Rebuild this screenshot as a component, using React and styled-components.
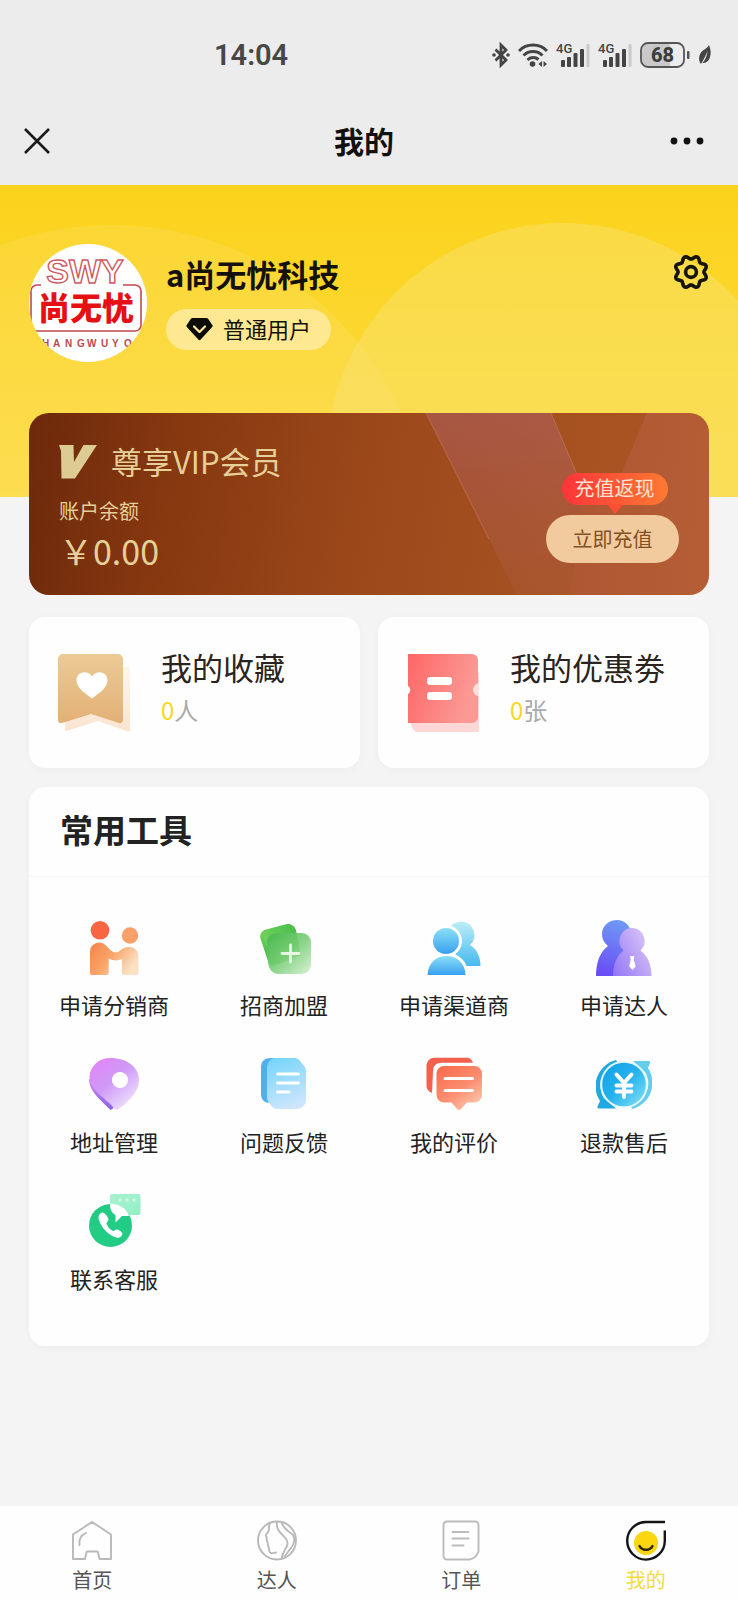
import React from "react";
import styled, { createGlobalStyle } from "styled-components";

const tools = [
  { name: "申请分销商", icon: <PartnerIcon /> },
  { name: "招商加盟", icon: <JoinIcon /> },
  { name: "申请渠道商", icon: <ChannelIcon /> },
  { name: "申请达人", icon: <TalentIcon /> },
  { name: "地址管理", icon: <AddressIcon /> },
  { name: "问题反馈", icon: <FeedbackIcon /> },
  { name: "我的评价", icon: <ReviewIcon /> },
  { name: "退款售后", icon: <RefundIcon /> },
  { name: "联系客服", icon: <ServiceIcon /> },
];

const tabs = [
  { name: "首页", icon: <HomeTabIcon /> },
  { name: "达人", icon: <TalentTabIcon /> },
  { name: "订单", icon: <OrderTabIcon /> },
  { name: "我的", icon: <MineTabIcon />, active: true },
];

const App = () => {
  return (
    <Page>
      <GlobalStyle />
      <Header>
        <StatusBar>
          <Time>14:04</Time>
          <StatusIcons />
        </StatusBar>
        <TitleBar>
          <IconButton aria-label="关闭">
            <svg width="26" height="26" viewBox="0 0 26 26">
              <path d="M1 1 25 25M25 1 1 25" stroke="#1b1b1b" strokeWidth="2.6" />
            </svg>
          </IconButton>
          <h1>我的</h1>
          <IconButton aria-label="更多">
            <svg width="34" height="10" viewBox="0 0 34 10" fill="#111">
              <circle cx="4" cy="5" r="3.4" />
              <circle cx="17" cy="5" r="3.4" />
              <circle cx="30" cy="5" r="3.4" />
            </svg>
          </IconButton>
        </TitleBar>
      </Header>

      <Main>
        <Hero>
          <HeroArt viewBox="0 0 738 312" preserveAspectRatio="xMidYMin slice">
            <circle cx="112" cy="356" r="316" fill="#fff" fillOpacity="0.09" />
            <circle cx="563" cy="274" r="236" fill="#f8e47a" fillOpacity="0.42" />
          </HeroArt>
          <Profile>
            <Avatar />
            <ProfileInfo>
              <h2>a尚无忧科技</h2>
              <Level>
                <svg width="27" height="24" viewBox="0 0 27 24">
                  <path
                    d="M6.5 1h14a2 2 0 0 1 1.6.8l4.200 6.200a1.5 1.5 0 0 1-.1 1.9L14.7 22.5a1.6 1.6 0 0 1-2.4 0L.8 9.900A1.5 1.5 0 0 1 .7 8l4.200-6.200A2 2 0 0 1 6.5 1z"
                    fill="#0d0b05"
                  />
                  <path
                    d="M8 9.500l5.500 5.500L19 9.500"
                    fill="none"
                    stroke="#fdeaa0"
                    strokeWidth="2.2"
                    strokeLinecap="round"
                    strokeLinejoin="round"
                  />
                </svg>
                <span>普通用户</span>
              </Level>
            </ProfileInfo>
            <SettingsButton aria-label="设置">
              <GearIcon />
            </SettingsButton>
          </Profile>
        </Hero>

        <Content>
          <VipCard>
            <VipArt viewBox="0 0 680 182" preserveAspectRatio="xMaxYMid slice">
              <defs>
                <linearGradient id="vip-band" x1="0" y1="0" x2="0" y2="1">
                  <stop offset="0" stopColor="#b0626a" stopOpacity="0.5" />
                  <stop offset="1" stopColor="#b0625a" stopOpacity="0.2" />
                </linearGradient>
                <linearGradient id="vip-edge" x1="0" y1="0" x2="1" y2="0">
                  <stop offset="0" stopColor="#b85f4c" stopOpacity="0.4" />
                  <stop offset="1" stopColor="#bd6442" stopOpacity="0.5" />
                </linearGradient>
              </defs>
              <path d="M397 0H522L556 80 540 182H488Z" fill="url(#vip-band)" />
              <path d="M618 0H680V182H540L556 80H584Z" fill="url(#vip-edge)" />
              <path
                d="M397 0 460 126M522 0 550 66"
                stroke="#d08070"
                strokeOpacity="0.5"
              />
            </VipArt>
            <VipInfo>
              <VipTitle>
                <svg width="38" height="34" viewBox="0 0 38 34">
                  <path
                    d="M0 0H14.5L15 17 24.5 0H38L16 33.5H2.5L2 6z"
                    fill="#dccb92"
                  />
                </svg>
                <span>尊享VIP会员</span>
              </VipTitle>
              <BalanceLabel>账户余额</BalanceLabel>
              <Balance>￥0.00</Balance>
            </VipInfo>
            <Recharge>
              <CashBack>充值返现</CashBack>
              <RechargeButton>立即充值</RechargeButton>
            </Recharge>
          </VipCard>

          <Features>
            <Feature href="#favorites">
              <FavoriteIcon />
              <div>
                <h3>我的收藏</h3>
                <p>
                  <b>0</b>人
                </p>
              </div>
            </Feature>
            <Feature href="#coupons">
              <CouponIcon />
              <div>
                <h3>我的优惠劵</h3>
                <p>
                  <b>0</b>张
                </p>
              </div>
            </Feature>
          </Features>

          <Panel>
            <PanelTitle>常用工具</PanelTitle>
            <ToolGrid>
              {tools.map((tool) => (
                <Tool href="#tool" key={tool.name}>
                  {tool.icon}
                  <span>{tool.name}</span>
                </Tool>
              ))}
            </ToolGrid>
          </Panel>
        </Content>
      </Main>

      <TabBar>
        {tabs.map((tab) => (
          <Tab href="#tab" key={tab.name} $active={tab.active}>
            {tab.icon}
            <span>{tab.name}</span>
          </Tab>
        ))}
      </TabBar>
    </Page>
  );
};

export default App;

function StatusIcons() {
  return (
    <StatusGroup>
      <svg width="18" height="26" viewBox="0 0 18 26">
        <path
          d="M3.500 7.500 14 18l-5 5V3l5 5L3.500 18.500"
          fill="none"
          stroke="#444"
          strokeWidth="2.8"
        />
        <circle cx="2" cy="13" r="1.8" fill="#444" />
        <circle cx="16" cy="13" r="1.8" fill="#444" />
      </svg>
      <svg width="30" height="26" viewBox="0 0 30 26">
        <g fill="none" stroke="#444" strokeWidth="3">
          <path d="M1 9a19.500 19.500 0 0 1 28 0" />
          <path d="M5.500 13.500a13.500 13.500 0 0 1 19 0" />
          <path d="M9.500 18a8 8 0 0 1 11-.5" />
        </g>
        <circle cx="14.5" cy="22" r="2.8" fill="#444" />
        <path d="M24 19v6L20.500 22zM25.500 19v6l3.500-3z" fill="#444" />
      </svg>
      <Signal />
      <Signal />
      <svg width="50" height="26" viewBox="0 0 50 26">
        <path d="M8 1.500H30V24.500H8a6 6 0 0 1-6-6V7.500a6 6 0 0 1 6-6z" fill="#c9c9c9" />
        <rect x="1" y="1" width="43" height="24" rx="7" fill="none" stroke="#555" strokeWidth="1.8" />
        <rect x="47" y="9" width="2.5" height="8" rx="1" fill="#555" />
        <text
          x="22.5"
          y="20"
          textAnchor="middle"
          fontFamily="Roboto, sans-serif"
          fontSize="20"
          fontWeight="800"
          fill="#3c3c3c"
        >
          68
        </text>
      </svg>
      <svg width="13" height="22" viewBox="0 0 13 22">
        <path
          d="M11 1c2 5 2 9 1 12-1 4-4 6-7.500 6C8 15 9 11 9.500 7 8 11 6 15 3 20 .5 17 .5 12 3 8.500 5 5.500 9 5 11 1z"
          fill="#444"
        />
      </svg>
    </StatusGroup>
  );
}

function Signal() {
  return (
    <svg width="34" height="26" viewBox="0 0 34 26">
      <text
        x="0"
        y="11"
        fontFamily="Roboto, sans-serif"
        fontSize="13"
        fontWeight="500"
        fill="#444"
      >
        4G
      </text>
      <g fill="#444">
        <rect x="5" y="18" width="4" height="7" rx="1" />
        <rect x="11" y="15" width="4" height="10" rx="1" />
        <rect x="17.5" y="11" width="4" height="14" rx="1" />
        <rect x="24" y="7" width="4" height="18" rx="1" />
      </g>
      <rect x="30.5" y="2" width="3" height="23" rx="1" fill="#c8c8c8" />
    </svg>
  );
}

function Avatar() {
  return (
    <AvatarImage viewBox="0 0 118 118" role="img" aria-label="尚无忧">
      <rect width="118" height="118" fill="#fff" />
      <path
        d="M12 41H8a6 6 0 0 0-6 6V81a6 6 0 0 0 6 6H106a6 6 0 0 0 6-6V47a6 6 0 0 0-6-6H94"
        fill="none"
        stroke="#c2474f"
        strokeWidth="1.6"
      />
      <text
        x="56"
        y="39"
        textAnchor="middle"
        fontFamily="Liberation Sans, sans-serif"
        fontSize="34"
        fontWeight="700"
        fill="#fff"
        stroke="#cf5a63"
        strokeWidth="1.4"
      >
        SWY
      </text>
      <text
        x="57"
        y="76"
        textAnchor="middle"
        fontFamily="Noto Sans CJK SC, sans-serif"
        fontSize="32"
        fontWeight="900"
        fill="#e60f14"
      >
        尚无忧
      </text>
      <text
        x="1 13 24 36 48 58 72 83 95 107"
        y="103"
        fontFamily="Liberation Sans, sans-serif"
        fontSize="10"
        fontWeight="700"
        fill="#b84a52"
      >
        SHANGWUYOU
      </text>
    </AvatarImage>
  );
}

// eight soft lobes around the hub
const gearOutline = Array.from({ length: 96 }, (_, i) => {
  const a = (i / 96) * Math.PI * 2;
  const r = 14.6 - 1.7 * Math.cos(8 * a);
  return `${(18 + r * Math.cos(a)).toFixed(2)} ${(18 + r * Math.sin(a)).toFixed(2)}`;
}).join("L");

function GearIcon() {
  return (
    <svg width="36" height="36" viewBox="0 0 36 36" fill="none" stroke="#17140a" strokeWidth="3.6">
      <path d={`M${gearOutline}Z`} strokeLinejoin="round" />
      <circle cx="18" cy="18" r="5.4" />
    </svg>
  );
}

function FavoriteIcon() {
  return (
    <svg width="74" height="80" viewBox="0 0 74 80">
      <defs>
        <linearGradient id="fav" x1="0" y1="0" x2="0" y2="1">
          <stop offset="0" stopColor="#ecca95" />
          <stop offset="1" stopColor="#e3b077" />
        </linearGradient>
        <linearGradient id="fav-shadow" x1="0" y1="0" x2="0" y2="1">
          <stop offset="0" stopColor="#fdf6ee" />
          <stop offset="1" stopColor="#fae4d0" />
        </linearGradient>
      </defs>
      <path
        d="M7 14H71a1 1 0 0 1 1 1V77a1.500 1.500 0 0 1-2 1.500L40 68 10 77.500a2 2 0 0 1-3-2z"
        fill="url(#fav-shadow)"
      />
      <path
        d="M5 1H60a5 5 0 0 1 5 5V67a3 3 0 0 1-4 3L33 61 4 70a3 3 0 0 1-4-3V6a5 5 0 0 1 5-5z"
        fill="url(#fav)"
      />
      <path
        d="M34 45.500C28 41 18.500 35 18.500 27.500c0-9 11-11 15.500-4 4.500-7 15.500-5 15.500 4C49.500 35 40 41 34 45.500z"
        fill="#fff"
      />
    </svg>
  );
}

function CouponIcon() {
  return (
    <svg width="74" height="80" viewBox="0 0 74 80">
      <defs>
        <linearGradient id="coupon" x1="0" y1="0" x2="1" y2="0.3">
          <stop offset="0" stopColor="#fd6766" />
          <stop offset="1" stopColor="#fb9a95" />
        </linearGradient>
      </defs>
      <path d="M4 20H72V79H10c-3 0-5-4-6-8z" fill="#fdd6d6" />
      <path
        d="M1 1H65a6 6 0 0 1 6 6V30a7 7 0 0 0 0 13V64a6 6 0 0 1-6 6H1V41c3-2 3-6 0-8z"
        fill="url(#coupon)"
      />
      <path d="M72 31a6 6 0 0 0 0 12z" fill="#fbe0dc" />
      <rect x="20" y="24" width="25" height="8" rx="3" fill="#fff" />
      <rect x="20" y="39" width="25" height="8" rx="3" fill="#fff" />
    </svg>
  );
}

function PartnerIcon() {
  return (
    <svg width="56" height="56" viewBox="0 0 56 56">
      <defs>
        <linearGradient id="partner" x1="0" y1="0" x2="1" y2="0.5">
          <stop offset="0" stopColor="#f7834a" />
          <stop offset="0.5" stopColor="#f9a468" />
          <stop offset="1" stopColor="#fbe0c4" />
        </linearGradient>
      </defs>
      <circle cx="14" cy="10.3" r="9.3" fill="#f76542" />
      <circle cx="44" cy="15.5" r="8.2" fill="#f8a069" />
      <path
        d="M4 32a9.300 9.300 0 0 1 16-6.500c4 4 6 7 10 7s5-5.500 13-5.500a9 9 0 0 1 9.500 9V53a2 2 0 0 1-2 2H38a2 2 0 0 1-2-2V39c-4 2-9 2-13.300-.5V53a2 2 0 0 1-2 2H6a2 2 0 0 1-2-2z"
        fill="url(#partner)"
      />
    </svg>
  );
}

function JoinIcon() {
  return (
    <svg width="56" height="56" viewBox="0 0 56 56">
      <defs>
        <linearGradient id="join" x1="0" y1="0" x2="1" y2="1">
          <stop offset="0" stopColor="#46b84c" />
          <stop offset="0.5" stopColor="#7acd78" />
          <stop offset="1" stopColor="#d3f0d0" />
        </linearGradient>
        <linearGradient id="join-back" x1="1" y1="0" x2="0" y2="1">
          <stop offset="0" stopColor="#43ba49" />
          <stop offset="0.6" stopColor="#6fd15b" />
          <stop offset="1" stopColor="#2ca63c" />
        </linearGradient>
      </defs>
      <path
        d="M10 9.500 30 4.300c5-1 8.500 1.700 10 5.700L45 36 16 46c-3-2-4-5-5-8L4.300 18C3.500 14 6 10.500 10 9.500z"
        fill="url(#join-back)"
      />
      <path
        d="M20 13H46a9 9 0 0 1 9 9V45a9 9 0 0 1-9 9H23c-7 0-10-5-11-11l-1-21a9 9 0 0 1 9-9z"
        fill="url(#join)"
        fillOpacity="0.9"
      />
      <path d="M34.500 25v17M26 33.500h17" stroke="#e5f8e2" strokeWidth="2.8" strokeLinecap="round" />
    </svg>
  );
}

function ChannelIcon() {
  return (
    <svg width="56" height="56" viewBox="0 0 56 56">
      <defs>
        <linearGradient id="channel" x1="0" y1="0" x2="0" y2="1">
          <stop offset="0" stopColor="#8be0f5" />
          <stop offset="1" stopColor="#38a0f0" />
        </linearGradient>
        <linearGradient id="channel-back" x1="0" y1="0" x2="0" y2="1">
          <stop offset="0" stopColor="#bdeef6" />
          <stop offset="1" stopColor="#45baf0" />
        </linearGradient>
      </defs>
      <path
        d="M35 1.500a13.500 13.500 0 0 1 9 23.500C51 29 54.500 37 54.500 46H36L24 24 22 11A13.500 13.500 0 0 1 35 1.500z"
        fill="url(#channel-back)"
      />
      <g stroke="#fff" strokeWidth="6" fill="#fff">
        <path d="M1.500 55C2 43 10 36 20.500 36S39 43 39.500 55z" />
        <circle cx="20" cy="21" r="13" />
      </g>
      <g fill="url(#channel)">
        <path d="M1.500 55C2 43 10 36 20.500 36S39 43 39.500 55z" />
        <circle cx="20" cy="21" r="13" />
      </g>
    </svg>
  );
}

function TalentIcon() {
  return (
    <svg width="56" height="56" viewBox="0 0 56 56">
      <defs>
        <linearGradient id="talent-back" x1="0.5" y1="0" x2="0.3" y2="1">
          <stop offset="0" stopColor="#6f97f5" />
          <stop offset="1" stopColor="#6a4cf5" />
        </linearGradient>
        <linearGradient id="talent" x1="0" y1="1" x2="1" y2="0.3">
          <stop offset="0" stopColor="#9273f5" />
          <stop offset="1" stopColor="#d8c4f8" />
        </linearGradient>
      </defs>
      <path
        d="M21 0a14 14 0 0 1 14 14c0 5-2 8-5 11V56H0C0 42 4 32 12 26c-4-3-6-7-6-12A15 14 0 0 1 21 0z"
        fill="url(#talent-back)"
      />
      <path
        d="M36 8a13 13 0 0 1 8.500 22.500C52 36 55.500 45 55.500 56H17c0-11 3.500-20 10.500-25.500A13 13 0 0 1 36 8z"
        fill="url(#talent)"
      />
      <path d="M34 36h4.500l-.8 3.200 2 7L36.500 50l-3.400-3.800 1.700-7z" fill="#fff" />
    </svg>
  );
}

function AddressIcon() {
  return (
    <svg width="56" height="56" viewBox="0 0 56 56">
      <defs>
        <linearGradient id="address" x1="0.1" y1="0" x2="0.9" y2="1">
          <stop offset="0" stopColor="#e383f7" />
          <stop offset="0.45" stopColor="#cf9af7" />
          <stop offset="1" stopColor="#f5effe" />
        </linearGradient>
        <linearGradient id="address-side" x1="0" y1="0" x2="0" y2="1">
          <stop offset="0" stopColor="#d58af8" />
          <stop offset="1" stopColor="#8b63e0" />
        </linearGradient>
      </defs>
      <path d="M3 22c0 13 13 22 21 30.500 2 .8 3-1 4-3L30 30z" fill="url(#address-side)" />
      <path
        d="M24 1c17 0 29 9 29 22 0 10-8 20-20 29-2 1-4 .5-5-1C20 41 4 34 3.500 20 4 9 13 1 24 1z"
        fill="url(#address)"
      />
      <circle cx="34" cy="23" r="8" fill="#fff" />
    </svg>
  );
}

function FeedbackIcon() {
  return (
    <svg width="56" height="56" viewBox="0 0 56 56">
      <defs>
        <linearGradient id="feedback" x1="0.3" y1="0" x2="0.6" y2="1">
          <stop offset="0" stopColor="#78d5fa" />
          <stop offset="1" stopColor="#cfe6fd" />
        </linearGradient>
      </defs>
      <path d="M15 1H40V46H14C9 46 5 43 5 37V10C5 4 9 1 15 1z" fill="#4fb0ee" />
      <path
        d="M21 1H37c3 0 5 .5 7 3l4 5c2 2 2 4 2 7V43a9 9 0 0 1-9 9H22c-4 0-6-2-8-5-2-2-3-4-3-8V10A9 9 0 0 1 21 1z"
        fill="url(#feedback)"
      />
      <path d="M21.500 17h21M21.500 26h21M21.500 35h11.500" stroke="#fff" strokeWidth="3" strokeLinecap="round" />
    </svg>
  );
}

function ReviewIcon() {
  return (
    <svg width="56" height="56" viewBox="0 0 56 56">
      <defs>
        <linearGradient id="review" x1="0.2" y1="0" x2="0.9" y2="1">
          <stop offset="0" stopColor="#fa6f50" />
          <stop offset="0.5" stopColor="#fb8d70" />
          <stop offset="1" stopColor="#fcd0b4" />
        </linearGradient>
      </defs>
      <path
        d="M6 36C2 34 .5 32 .5 28V8A7.500 7.500 0 0 1 8 .8H40c4 0 6 2 7 5H16c-6 0-9 3-9 9z"
        fill="#f4604e"
      />
      <path
        d="M18 9H48.500a7.500 7.500 0 0 1 7.500 7.500V38a7.500 7.500 0 0 1-7.500 7.500H41L35 52a2.500 2.500 0 0 1-4 0l-5.500-6.500H18A7.500 7.500 0 0 1 10.500 38V16.500A7.500 7.500 0 0 1 18 9z"
        fill="url(#review)"
      />
      <path d="M19 21.500h27.500M19 33.500h27.500" stroke="#fff" strokeWidth="3" strokeLinecap="round" />
    </svg>
  );
}

function RefundIcon() {
  return (
    <svg width="56" height="56" viewBox="0 0 56 56">
      <defs>
        <linearGradient id="refund" x1="0" y1="0" x2="1" y2="1">
          <stop offset="0" stopColor="#0f9fe6" />
          <stop offset="0.5" stopColor="#25b3ee" />
          <stop offset="1" stopColor="#8fe6f4" />
        </linearGradient>
      </defs>
      <path
        d="M20 3A27 27 0 0 0 4 44L1.500 49.500a1.500 1.500 0 0 0 1.500 2H20L8 41C0 28 6 12 22 6.500z"
        fill="#20a8e2"
      />
      <path d="M36 52a27 27 0 0 0 16-41l2-5.500A1 1 0 0 0 53 4H37l12 11c8 13 1 28-14 33.500z" fill="#62cdec" />
      <circle cx="28" cy="27.5" r="22.8" fill="url(#refund)" stroke="#e6f8fd" strokeWidth="2" />
      <path
        d="M20.500 17.500l7.500 8.500 7.500-8.500M28 27v13M20.500 28.500h15M20.500 34.500h15"
        fill="none"
        stroke="#fff"
        strokeWidth="4"
        strokeLinecap="round"
      />
    </svg>
  );
}

function ServiceIcon() {
  return (
    <svg width="56" height="56" viewBox="0 0 56 56">
      <defs>
        <linearGradient id="service" x1="0" y1="0" x2="1" y2="1">
          <stop offset="0" stopColor="#a9f0cf" />
          <stop offset="0.5" stopColor="#a0f0cd" />
          <stop offset="1" stopColor="#8feec2" />
        </linearGradient>
      </defs>
      <circle cx="24.5" cy="31.5" r="21.5" fill="#22cc84" />
      <path d="M24 10C32 8 41 14 43 22H36l-6.500 6.500V21C26 19 24 16 24 10z" fill="#fff" />
      <path
        d="M24 2a2 2 0 0 1 2-2H52.500A2 2 0 0 1 54.500 2V19a2 2 0 0 1-2 2H43C40 15 34 10 24 9.500z"
        fill="url(#service)"
      />
      <path
        d="M16 18.500c-4 2-4 5-2.500 9 2.500 6.500 8 12.500 15 15.500 4 1.500 7 .5 8-3 .3-1.500-4-5-6-4.500-1.500.2-2 2-3.500 1.500-3-1.500-6-5-6.500-7.500 0-1.500 2-2 2-4 0-2-4-7.500-6.500-7z"
        fill="#fff"
      />
      <g fill="#d2f8e6">
        <circle cx="34" cy="6" r="1.7" />
        <circle cx="41" cy="6" r="1.7" />
        <circle cx="48" cy="6" r="1.7" />
      </g>
    </svg>
  );
}

function HomeTabIcon() {
  return (
    <svg width="42" height="42" viewBox="0 0 42 42" fill="none" stroke="#b9b9b9" strokeWidth="1.9" strokeLinejoin="round">
      <path d="M2 14.500 21 2l19 12.500V39H28.500l-1.500-6.500a1 1 0 0 0-1-1H16.500a1 1 0 0 0-1 1L14 39H2z" />
      <path d="M8.500 25c-1-6 1-9.500 6.500-12" strokeLinecap="round" />
    </svg>
  );
}

function TalentTabIcon() {
  return (
    <svg width="42" height="42" viewBox="0 0 42 42" fill="none" stroke="#b9b9b9" strokeWidth="1.9" strokeLinecap="round">
      <circle cx="21" cy="20.5" r="19" />
      <path d="M14 3c-2 4 0 7-2 9-1 2-3 3-2 4 1.500 1 0 3 1 5 1.500 2 0 4 1.500 6 1 2 0 5 2 6 2 .8 4-.5 5.500-.5" />
      <path d="M21 2c-2 12 12 14 10.500 22-1 6-5 6-6 15M26 3c1 6 7 8 11 12 2 4 2 8-2 13-3 4-5 6-6.500 9" />
    </svg>
  );
}

function OrderTabIcon() {
  return (
    <svg width="42" height="42" viewBox="0 0 42 42" fill="none" stroke="#bcbcbc" strokeWidth="1.9" strokeLinecap="round">
      <path d="M7 1.500H35a3.500 3.500 0 0 1 3.500 3.500V31.500C37 36 35 38.500 29.500 39.500H7A3.500 3.500 0 0 1 3.500 36V5A3.500 3.500 0 0 1 7 1.500z" />
      <path d="M12.500 12h16M12.500 18.500h16M12.500 25.500h11" />
    </svg>
  );
}

function MineTabIcon() {
  return (
    <svg width="42" height="42" viewBox="0 0 42 42" fill="none" strokeWidth="2.4">
      <path d="M40 2H21A18.800 18.800 0 1 0 39.800 21V10.500" stroke="#151515" />
      <circle cx="21" cy="23" r="12" fill="#fcd60f" />
      <path d="M14.500 26c2.500 5 10.500 5 13 0" stroke="#2a2206" strokeLinecap="round" />
    </svg>
  );
}

const GlobalStyle = createGlobalStyle`
  * {
    box-sizing: border-box;
  }
  body {
    margin: 0;
    background: #f4f4f4;
    color: #222;
    font-family: "Noto Sans CJK SC", sans-serif;
  }
  h1, h2, h3, p {
    margin: 0;
    font-weight: 400;
  }
  a {
    color: inherit;
    text-decoration: none;
  }
  button {
    border: none;
    padding: 0;
    background: none;
    font-family: inherit;
  }
  svg {
    display: block;
    flex-shrink: 0;
  }
`;

const Page = styled.div`
  min-height: 100vh;
  display: flex;
  flex-direction: column;
`;

const Header = styled.header`
  background: #ececec;
`;

const StatusBar = styled.div`
  height: 96px;
  padding: 14px 27px 0 29%;
  display: flex;
  align-items: center;
  justify-content: space-between;
`;

const Time = styled.span`
  font-family: Roboto, sans-serif;
  font-size: 29px;
  font-weight: 600;
  color: #474747;
`;

const StatusGroup = styled.div`
  display: flex;
  align-items: center;
  gap: 8px;
`;

const TitleBar = styled.div`
  height: 89px;
  padding: 0 34px 0 24px;
  display: grid;
  grid-template-columns: 34px 1fr 34px;
  align-items: center;
  h1 {
    padding-bottom: 2px;
    font-size: 30px;
    line-height: 40px;
    font-weight: 700;
    text-align: center;
    color: #111;
  }
`;

const IconButton = styled.button`
  display: flex;
`;

const Main = styled.main`
  flex: 1;
`;

const Hero = styled.section`
  position: relative;
  overflow: hidden;
  padding: 59px 29px 135px;
  background: linear-gradient(#fbd31c, #fdda40);
`;

const HeroArt = styled.svg`
  position: absolute;
  inset: 0;
  width: 100%;
  height: 100%;
`;

const Profile = styled.div`
  position: relative;
  display: flex;
  align-items: center;
  gap: 19px;
`;

const AvatarImage = styled.svg`
  width: 118px;
  height: 118px;
  border-radius: 50%;
`;

const ProfileInfo = styled.div`
  flex: 1;
  h2 {
    font-size: 31px;
    line-height: 34px;
    font-weight: 700;
    color: #14110a;
  }
`;

const Level = styled.div`
  width: fit-content;
  height: 41px;
  margin-top: 18px;
  padding: 0 20px;
  display: flex;
  align-items: center;
  gap: 10px;
  border-radius: 21px;
  background: #fee992;
  font-size: 22px;
  color: #14110a;
  span {
    padding-bottom: 2px;
  }
`;

const SettingsButton = styled.button`
  align-self: flex-start;
  margin-top: 10px;
`;

const Content = styled.div`
  padding: 0 29px;
`;

const VipCard = styled.section`
  position: relative;
  overflow: hidden;
  margin-top: -84px;
  padding: 32px 30px 18px;
  display: flex;
  justify-content: space-between;
  border-radius: 20px;
  background: linear-gradient(
    100deg,
    #6c290b,
    #85370f 20%,
    #9c481b 50%,
    #a65120 75%,
    #ae5628
  );
  color: #e6cf98;
`;

const VipArt = styled.svg`
  position: absolute;
  inset: 0;
  width: 100%;
  height: 100%;
`;

const VipInfo = styled.div`
  position: relative;
`;

const VipTitle = styled.div`
  height: 36px;
  display: flex;
  gap: 14px;
  font-size: 31px;
  line-height: 32px;
`;

const BalanceLabel = styled.p`
  margin-top: 16px;
  font-size: 20px;
  line-height: 28px;
`;

const Balance = styled.p`
  margin: 4px 0;
  font-size: 34px;
  line-height: 44px;
`;

const Recharge = styled.div`
  position: relative;
  align-self: flex-end;
  margin-bottom: 14px;
  display: flex;
  flex-direction: column;
  align-items: center;
  gap: 10px;
`;

const CashBack = styled.div`
  position: relative;
  width: 106px;
  height: 32px;
  margin-left: 4px;
  border-radius: 16px;
  background: linear-gradient(90deg, #fd3439, #fc7a33);
  font-size: 20px;
  line-height: 30px;
  text-align: center;
  color: #ffe3cf;
  &::after {
    content: "";
    position: absolute;
    top: 31px;
    left: 45px;
    border: 8px solid transparent;
    border-top: 10px solid #fc5036;
    border-bottom: none;
  }
`;

const RechargeButton = styled.button`
  width: 133px;
  height: 48px;
  padding-bottom: 2px;
  border-radius: 24px;
  background: #f1cb9d;
  font-size: 20px;
  color: #83501f;
`;

const Features = styled.div`
  margin-top: 22px;
  display: grid;
  grid-template-columns: 1fr 1fr;
  gap: 18px;
`;

const Feature = styled.a`
  height: 151px;
  padding: 36px 29px;
  display: flex;
  align-items: flex-start;
  gap: 29px;
  border-radius: 16px;
  background: #fefefe;
  box-shadow: 0 2px 8px rgba(0, 0, 0, 0.03);
  white-space: nowrap;
  h3 {
    font-size: 31px;
    line-height: 28px;
    color: #2a2320;
  }
  p {
    margin-top: 15px;
    font-size: 24px;
    line-height: 28px;
    color: #aaa;
  }
  b {
    font-weight: 400;
    color: #f8d722;
  }
`;

const Panel = styled.section`
  margin: 19px 0 30px;
  border-radius: 16px;
  background: #fefefe;
  box-shadow: 0 2px 8px rgba(0, 0, 0, 0.03);
`;

const PanelTitle = styled.h2`
  && {
    padding: 0 31px 5px;
    border-bottom: 1px solid #f6f6f6;
    font-size: 33px;
    line-height: 84px;
    font-weight: 700;
    color: #222;
  }
`;

const ToolGrid = styled.div`
  padding: 43px 0 53px;
  display: grid;
  grid-template-columns: repeat(4, 1fr);
  row-gap: 38px;
`;

const Tool = styled.a`
  display: flex;
  flex-direction: column;
  align-items: center;
  gap: 13px;
  font-size: 22px;
  line-height: 30px;
`;

const TabBar = styled.nav`
  padding: 14px 0 7px;
  display: grid;
  grid-template-columns: repeat(4, 1fr);
  background: #fefefe;
`;

const Tab = styled.a`
  display: flex;
  flex-direction: column;
  align-items: center;
  gap: 5px;
  font-size: 20px;
  line-height: 26px;
  color: ${(props) => (props.$active ? "#f3dc3f" : "#555")};
`;
